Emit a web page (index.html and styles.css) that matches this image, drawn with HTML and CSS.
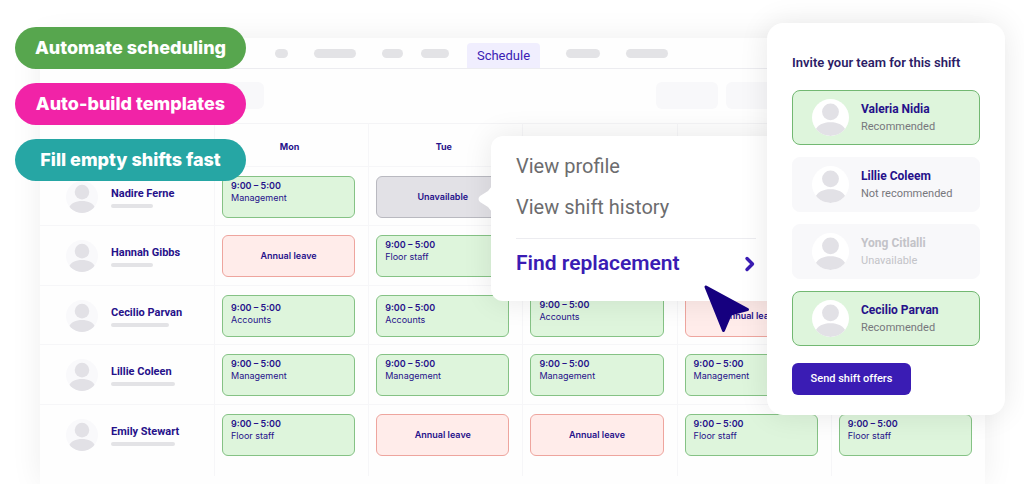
FILE: index.html
```html
<!DOCTYPE html>
<html lang="en">
<head>
    <meta charset="UTF-8">
    <meta name="viewport" content="width=device-width, initial-scale=1.0">
    <title>Schedule</title>
    <link rel="stylesheet" href="styles.css">
</head>
<body>
    <svg width="0" height="0" class="defs">
        <symbol id="person" viewBox="0 0 36 36">
            <clipPath id="round"><circle cx="18" cy="18" r="18"/></clipPath>
            <circle class="avatar-bg" cx="18" cy="18" r="18"/>
            <g clip-path="url(#round)" fill="#e2e1e6">
                <circle cx="18" cy="12.5" r="8.2"/>
                <path d="M3 31C5 25 11 22.5 18 22.5S31 25 33 31C30 34.500 24 36 18 36S6 34.500 3 31Z"/>
            </g>
        </symbol>
    </svg>

    <div class="stage">
        <main class="board">
            <nav class="nav">
                <span class="stub stub-xs"></span>
                <span class="stub stub-xl wide"></span>
                <span class="stub stub-s wide"></span>
                <span class="stub stub-m"></span>
                <a class="tab" href="#">Schedule</a>
                <span class="stub stub-l wide"></span>
                <span class="stub stub-xl wide"></span>
            </nav>
            <div class="toolbar">
                <span class="block block-wide"></span>
                <span class="block block-right"></span>
                <span class="block"></span>
            </div>
            <table class="schedule">
                <thead>
                    <tr>
                        <th class="who"></th>
                        <th>Mon</th>
                        <th>Tue</th>
                        <th></th>
                        <th></th>
                        <th></th>
                    </tr>
                </thead>
                <tbody>
                    <tr>
                        <td><div class="person"><svg class="avatar"><use href="#person"/></svg><div><b>Nadire Ferne</b><i class="bar bar-s"></i></div></div></td>
                        <td><div class="shift"><b>9:00 – 5:00</b>Management</div></td>
                        <td><div class="shift off">Unavailable</div></td>
                        <td></td>
                        <td></td>
                        <td></td>
                    </tr>
                    <tr>
                        <td><div class="person"><svg class="avatar"><use href="#person"/></svg><div><b>Hannah Gibbs</b><i class="bar bar-s"></i></div></div></td>
                        <td><div class="shift leave">Annual leave</div></td>
                        <td><div class="shift"><b>9:00 – 5:00</b>Floor staff</div></td>
                        <td></td>
                        <td></td>
                        <td></td>
                    </tr>
                    <tr>
                        <td><div class="person"><svg class="avatar"><use href="#person"/></svg><div><b>Cecilio Parvan</b><i class="bar bar-m"></i></div></div></td>
                        <td><div class="shift low"><b>9:00 – 5:00</b>Accounts</div></td>
                        <td><div class="shift low"><b>9:00 – 5:00</b>Accounts</div></td>
                        <td><div class="shift"><b>9:00 – 5:00</b>Accounts</div></td>
                        <td><div class="shift leave">Annual leave</div></td>
                        <td></td>
                    </tr>
                    <tr>
                        <td><div class="person"><svg class="avatar"><use href="#person"/></svg><div><b>Lillie Coleen</b><i class="bar bar-l"></i></div></div></td>
                        <td><div class="shift"><b>9:00 – 5:00</b>Management</div></td>
                        <td><div class="shift"><b>9:00 – 5:00</b>Management</div></td>
                        <td><div class="shift"><b>9:00 – 5:00</b>Management</div></td>
                        <td><div class="shift"><b>9:00 – 5:00</b>Management</div></td>
                        <td></td>
                    </tr>
                    <tr>
                        <td><div class="person"><svg class="avatar"><use href="#person"/></svg><div><b>Emily Stewart</b><i class="bar bar-l"></i></div></div></td>
                        <td><div class="shift"><b>9:00 – 5:00</b>Floor staff</div></td>
                        <td><div class="shift leave">Annual leave</div></td>
                        <td><div class="shift leave">Annual leave</div></td>
                        <td><div class="shift"><b>9:00 – 5:00</b>Floor staff</div></td>
                        <td><div class="shift"><b>9:00 – 5:00</b>Floor staff</div></td>
                    </tr>
                </tbody>
            </table>
        </main>

        <div class="pills">
            <span class="pill green">Automate scheduling</span>
            <span class="pill pink">Auto-build templates</span>
            <span class="pill teal">Fill empty shifts fast</span>
        </div>

        <div class="menu">
            <svg class="pointer" viewBox="0 0 14 26"><path d="M14 0V26L10 21L2 16Q-1 13 2 10L10 5Z" fill="#fff"/></svg>
            <button class="menu-item">View profile</button>
            <button class="menu-item">View shift history</button>
            <button class="menu-item main">Find replacement
                <svg width="12" height="16" viewBox="0 0 12 16"><path d="M3 2.500L8.500 8L3 13.500" fill="none" stroke="#3a1cb4" stroke-width="3.400" stroke-linecap="round" stroke-linejoin="round"/></svg>
            </button>
        </div>

        <svg class="cursor" viewBox="0 0 46 48"><path d="M2 2L43.500 24.500L26.500 29L19.500 45.500Z" fill="#16007f" stroke="#16007f" stroke-width="3" stroke-linejoin="round"/></svg>

        <aside class="panel">
            <h2>Invite your team for this shift</h2>
            <ul class="team">
                <li class="member picked">
                    <svg class="avatar"><use href="#person"/></svg>
                    <div><b>Valeria Nidia</b><span>Recommended</span></div>
                </li>
                <li class="member">
                    <svg class="avatar"><use href="#person"/></svg>
                    <div><b>Lillie Coleem</b><span>Not recommended</span></div>
                </li>
                <li class="member away">
                    <svg class="avatar"><use href="#person"/></svg>
                    <div><b>Yong Citlalli</b><span>Unavailable</span></div>
                </li>
                <li class="member picked">
                    <svg class="avatar"><use href="#person"/></svg>
                    <div><b>Cecilio Parvan</b><span>Recommended</span></div>
                </li>
            </ul>
            <button class="send">Send shift offers</button>
        </aside>
    </div>
</body>
</html>
```

FILE: styles.css
```css
* {
    box-sizing: border-box;
}

body {
    margin: 0;
    background: #fff;
    color: #26118a;
    font-family: Roboto, "Liberation Sans", sans-serif;
}

button {
    border: none;
    font-family: inherit;
    cursor: pointer;
}

.defs {
    position: absolute;
}

.stage {
    position: relative;
    display: flex;
    flex-direction: column;
    min-height: 100vh;
    padding: 38px 39px 0 40px;
    overflow: hidden;
}

.board {
    flex: 1;
    background: #fefefe;
    box-shadow: 0 0 30px rgba(0, 0, 0, 0.07);
}

/* top bar */
.nav {
    display: flex;
    align-items: center;
    gap: 18px;
    height: 31px;
    padding-left: 235px;
    border-bottom: 1px solid #ececf0;
}

.stub {
    height: 9px;
    border-radius: 5px;
    background: #e3e3e6;
}

.wide {
    margin-left: 8px;
}

.stub-xs { width: 13px; }
.stub-s { width: 21px; }
.stub-m { width: 28px; }
.stub-l { width: 34px; }
.stub-xl { width: 42px; }

.tab {
    align-self: flex-end;
    width: 73px;
    border-radius: 4px 4px 0 0;
    background: #f0eefe;
    color: #3a1cb4;
    font-size: 13px;
    line-height: 25px;
    text-align: center;
    text-decoration: none;
}

.toolbar {
    display: flex;
    gap: 8px;
    height: 54px;
    padding: 13px 197px 14px 90px;
}

.block {
    width: 62px;
    border-radius: 6px;
    background: #f8f8fa;
}

.block-wide {
    width: 134px;
}

.block-right {
    margin-left: auto;
}

/* schedule */
.schedule {
    width: 100%;
    table-layout: fixed;
    border-spacing: 0;
    font-family: Inter, sans-serif;
    font-size: 9px;
}

.schedule th {
    height: 43px;
    padding: 3px 4px 0 0;
    border-top: 1px solid #f4f4f6;
    border-left: 1px solid #f6f6f8;
    line-height: 12px;
}

.schedule td {
    height: 59px;
    padding: 9px 13px 7px 7px;
    border-top: 1px solid #f6f6f8;
    border-left: 1px solid #f6f6f8;
    vertical-align: top;
}

.schedule tr:nth-child(even) td {
    height: 60px;
}

.schedule th:first-child,
.schedule td:first-child {
    border-left: none;
}

.schedule tr:last-child td {
    height: 72px;
}

.schedule .who {
    width: 174px;
}

.person {
    display: flex;
    align-items: center;
    gap: 13px;
    height: 42px;
    padding-left: 19px;
    font-family: Roboto, sans-serif;
}

.person b {
    display: block;
    font-size: 11px;
    line-height: 14px;
}

.avatar {
    flex: none;
    width: 32px;
    height: 32px;
    fill: #f9f9fb;
}

.bar {
    display: block;
    height: 4px;
    margin: 3px 0 0;
    border-radius: 2px;
    background: #e3e3e6;
}

.bar-s { width: 42px; }
.bar-m { width: 58px; }
.bar-l { width: 64px; }

.shift {
    height: 42px;
    padding: 3px 8px;
    border: 1px solid #85c285;
    border-radius: 6px;
    background: #def5dc;
    line-height: 12px;
}

.shift b {
    display: block;
    font-weight: 600;
}

.shift.low {
    padding-top: 6px;
}

.shift.leave,
.shift.off {
    padding: 0;
    font-weight: 600;
    line-height: 40px;
    text-align: center;
}

.shift.leave {
    border-color: #eea59e;
    background: #ffecea;
}

.shift.off {
    border-color: #b9b9c0;
    background: #e2e1e6;
}

/* feature labels */
.pills {
    position: absolute;
    top: 27px;
    left: 15px;
    display: flex;
    flex-direction: column;
    gap: 14px;
    width: 231px;
}

.pill {
    border-radius: 21px;
    color: #fff;
    font-family: Inter, sans-serif;
    font-size: 18px;
    font-weight: 800;
    line-height: 42px;
    text-align: center;
}

.green { background: #57a64e; }
.pink { background: #f123a7; }
.teal { background: #26a6a4; }

/* pop-up menu */
.menu {
    position: absolute;
    top: 136px;
    left: 491px;
    width: 290px;
    padding: 10px 25px 17px;
    border-radius: 12px;
    background: #fff;
    box-shadow: 0 0 30px rgba(0, 0, 0, 0.09);
}

.pointer {
    position: absolute;
    top: 50px;
    left: -13px;
    width: 14px;
    height: 26px;
}

.menu-item {
    display: block;
    width: 100%;
    padding: 0;
    background: none;
    color: #6c6c6e;
    font-size: 20px;
    line-height: 41px;
    text-align: left;
}

.menu-item.main {
    display: flex;
    align-items: center;
    justify-content: space-between;
    margin-top: 10px;
    padding-top: 4px;
    border-top: 1px solid #ececf0;
    color: #3a1cb4;
    font-size: 21px;
    font-weight: 600;
}

.cursor {
    position: absolute;
    top: 285px;
    left: 704px;
    width: 46px;
    height: 48px;
}

/* invite panel */
.panel {
    position: absolute;
    top: 23px;
    right: 19px;
    width: 238px;
    padding: 30px 25px 20px;
    border-radius: 16px;
    background: #fff;
    box-shadow: 0 0 30px rgba(0, 0, 0, 0.09);
}

.panel h2 {
    margin: 0 0 18px;
    color: #2c1c66;
    font-size: 13px;
    font-weight: 600;
    line-height: 19px;
    white-space: nowrap;
}

.team {
    display: flex;
    flex-direction: column;
    gap: 12px;
    margin: 0 0 17px;
    padding: 0;
    list-style: none;
}

.member {
    display: flex;
    align-items: center;
    gap: 12px;
    height: 55px;
    padding-left: 19px;
    border: 1px solid #f8f8fa;
    border-radius: 8px;
    background: #f8f8fa;
    font-size: 12px;
    line-height: 17px;
}

.member .avatar {
    width: 37px;
    height: 37px;
    fill: #fff;
}

.member b,
.member span {
    display: block;
}

.member span {
    color: #77777c;
    font-size: 11px;
}

.picked {
    border-color: #72b872;
    background: #def5dc;
}

.away b,
.away span {
    color: #c3c3c8;
}

.send {
    width: 119px;
    padding: 0;
    border-radius: 6px;
    background: #3a1cb4;
    color: #fff;
    font-size: 11px;
    font-weight: 500;
    line-height: 32px;
}
```
